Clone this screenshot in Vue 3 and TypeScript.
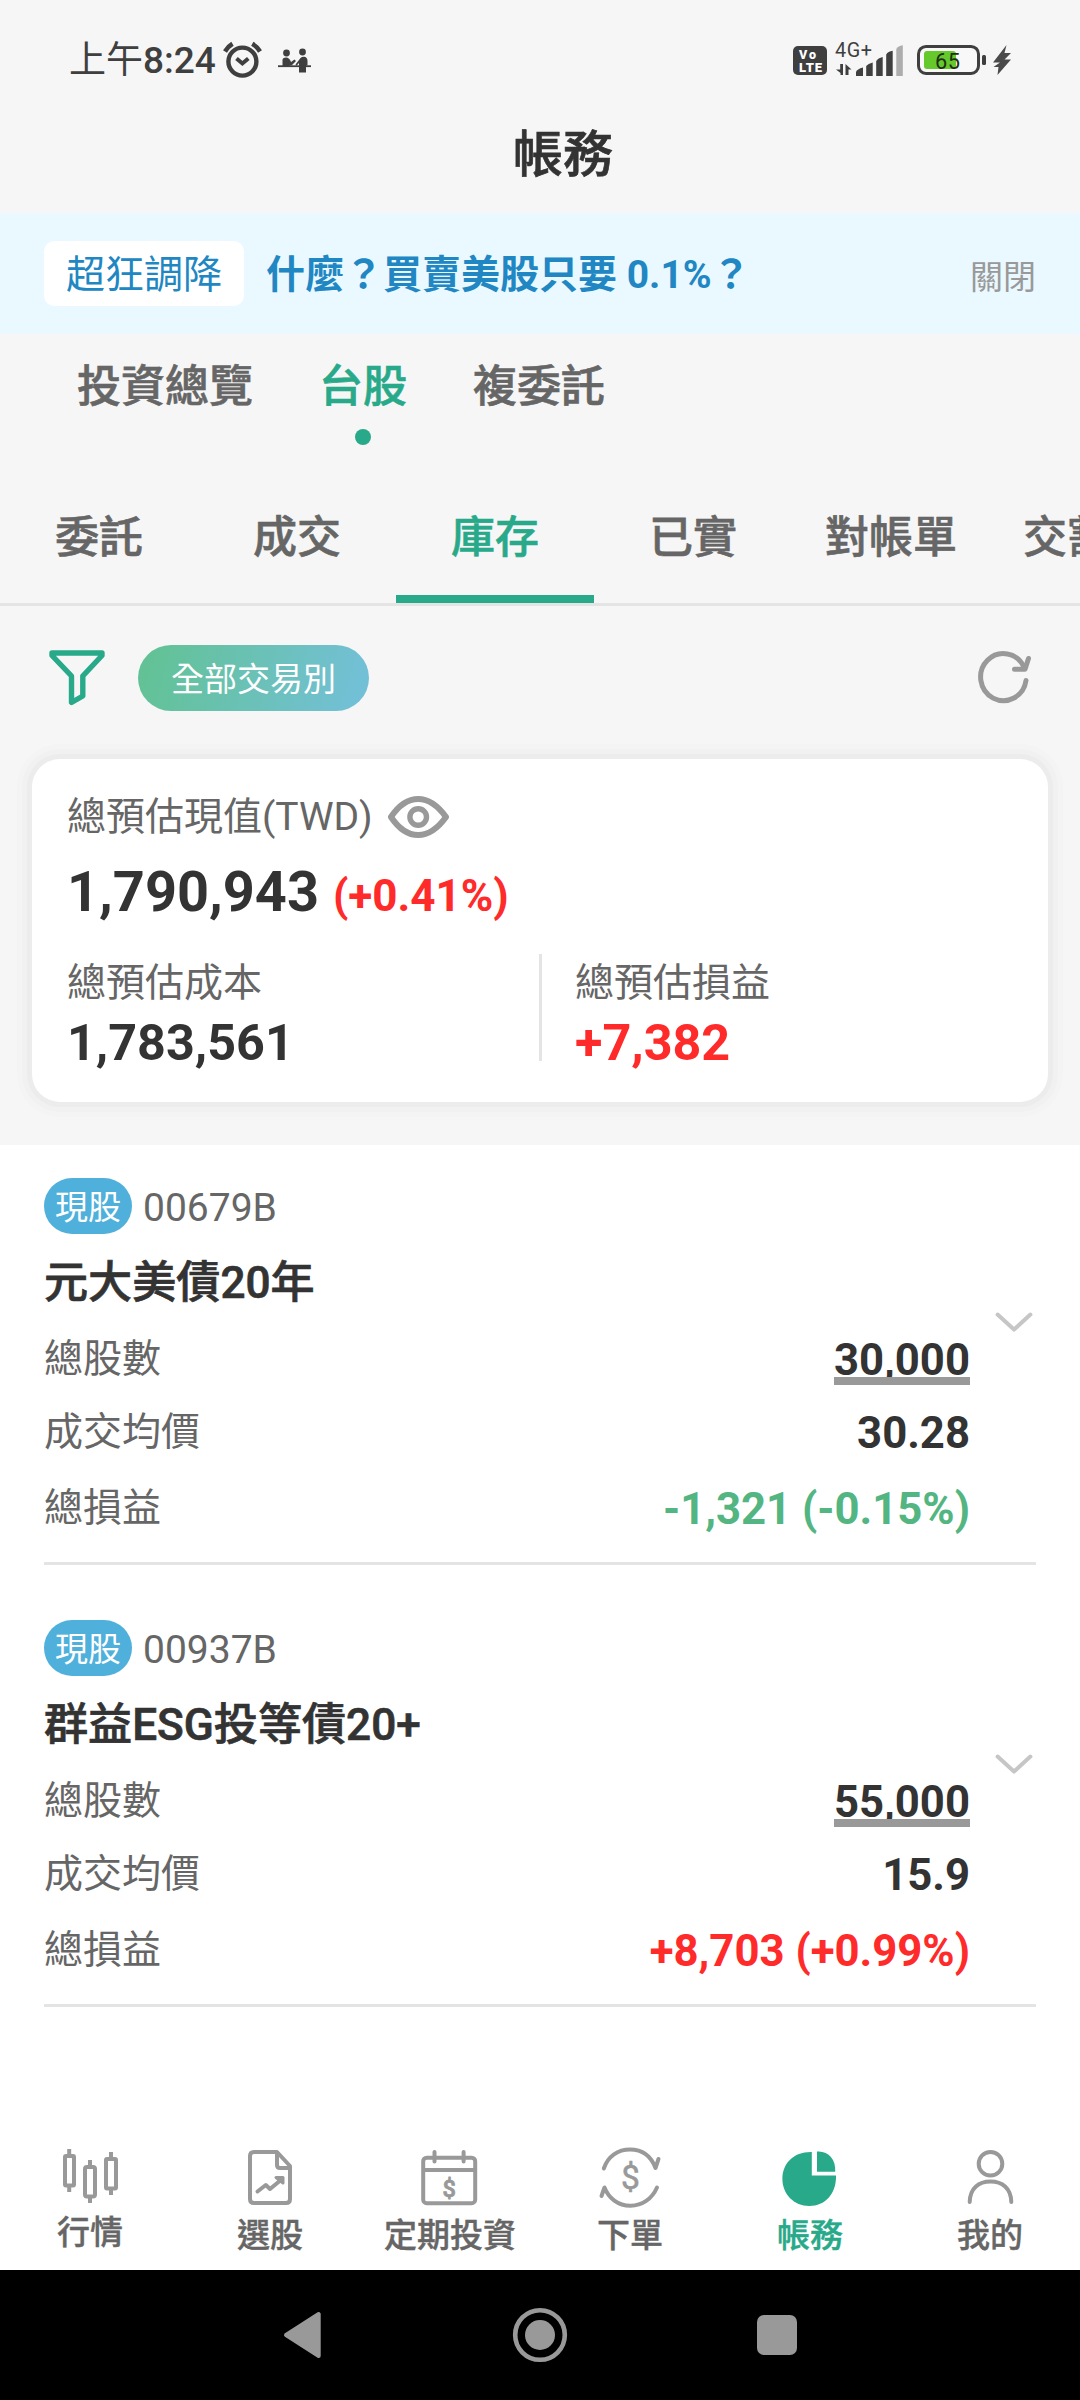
<script setup lang="ts">
interface Holding {
  code: string
  name: string
  shares: string
  price: string
  profit: string
  up: boolean
}

interface Tab {
  label: string
  active?: boolean
}

const marketTabs: Tab[] = [
  { label: '投資總覽' },
  { label: '台股', active: true },
  { label: '複委託' },
]

const recordTabs: Tab[] = [
  { label: '委託' },
  { label: '成交' },
  { label: '庫存', active: true },
  { label: '已實' },
  { label: '對帳單' },
  { label: '交割款' },
]

const holdings: Holding[] = [
  { code: '00679B', name: '元大美債20年', shares: '30,000', price: '30.28', profit: '-1,321 (-0.15%)', up: false },
  { code: '00937B', name: '群益ESG投等債20+', shares: '55,000', price: '15.9', profit: '+8,703 (+0.99%)', up: true },
]
</script>

<template>
  <div class="screen">
    <div class="top">
      <div class="status">
        <span class="clock"><span class="period">上午</span>8:24</span>
        <svg class="alarm" width="40" height="38" viewBox="223 40 40 38" fill="none" stroke="#3f3f3f">
          <circle cx="242.4" cy="60.6" r="14" stroke-width="4.4" />
          <path d="M225 50.5Q228 45.5 232.5 42.8M252.300 42.800Q257 45.500 260 50.500" stroke-width="4.6" />
          <path d="M236.500 57.500L242.400 62.500L248.300 57.500" stroke-width="4" />
        </svg>
        <svg class="people" width="34" height="26" viewBox="278 47 34 26" fill="#3f3f3f">
          <circle cx="286.500" cy="52" r="3.400" />
          <circle cx="302.500" cy="51" r="3.400" />
          <path d="M282.500 65V59Q282.500 56.500 286 56.500Q289.500 56.500 291 61L294.500 58.500L296 60L291.500 64.500H289.500V65Z" />
          <path d="M295.500 63.500L300.500 57Q302 55.500 304.500 55.800Q307.500 56.500 307.500 60V64.500H306V71.500H299V62L296.500 64.800Z" />
          <rect x="278" y="64.300" width="33" height="1.800" />
        </svg>
        <svg class="signals" width="220" height="38" viewBox="793 40 220 38">
          <rect x="793" y="45" width="34" height="29" rx="5" fill="#3f3f3f" />
          <text x="799" y="57.500" font-size="12.500" font-weight="900" fill="#fff" textLength="17">Vo</text>
          <text x="799" y="70.500" font-size="13" font-weight="900" fill="#fff" textLength="23">LTE</text>
          <text x="835" y="55.700" font-size="19.800" fill="#3f3f3f" textLength="37">4G+</text>
          <path d="M843 63V74H840.500V72L836 68.500H840.200V63ZM845.500 74V63L851.500 68.500H848.500V74Z" fill="#3f3f3f" />
          <path d="M856 75V71Q857 68 863 66.500V75ZM866.200 75V65Q868 62.500 872.700 61.500V75ZM876.200 75V60Q878 57 882.700 56V75ZM886.200 75V53.500Q888 50.500 892.700 49.800V75Z" fill="#3f3f3f" />
          <path d="M896.300 75V48Q898 45 902.800 44.300V75Z" fill="#adadad" />
          <rect x="918.500" y="45.400" width="60" height="27" rx="7.500" fill="#f8f8f8" stroke="#3f3f3f" stroke-width="3" />
          <rect x="924" y="50" width="32" height="18" rx="3" fill="#66c92b" />
          <text x="935" y="67.600" font-size="21.800" font-weight="400" fill="#1f2f14" textLength="25">65</text>
          <rect x="982" y="54" width="4" height="10" rx="1.500" fill="#3f3f3f" />
          <path d="M1006.500 44L993 61.500H1000L993.500 66H998.500L997.500 74L1011 58.500H1004.500L1011 52H1004.500Z" fill="#4a4a4a" />
        </svg>
      </div>
      <h1 class="title">帳務</h1>
    </div>

    <div class="banner">
      <span class="chip">超狂調降</span>
      <span class="pitch">什麼？買賣美股只要 0.1%？</span>
      <span class="close">關閉</span>
    </div>

    <nav class="markets">
      <div v-for="tab in marketTabs" :key="tab.label" class="market" :class="{ active: tab.active }">
        <span>{{ tab.label }}</span>
        <i v-if="tab.active" class="dot"></i>
      </div>
    </nav>

    <nav class="records">
      <div v-for="tab in recordTabs" :key="tab.label" class="record" :class="{ active: tab.active }">{{ tab.label }}</div>
    </nav>

    <section class="assets">
      <div class="filters">
        <svg class="funnel" width="58" height="58" viewBox="48 649 58 58" fill="none" stroke="#28a989" stroke-width="5.400" stroke-linejoin="round">
          <path d="M52 653H102V655.500L82.800 676V696L71.500 702.500V676L52 655.500Z" />
        </svg>
        <span class="pill">全部交易別</span>
        <svg class="refresh" width="56" height="56" viewBox="976 650 56 56" fill="none" stroke="#999" stroke-width="5" stroke-linecap="round" stroke-linejoin="round">
          <path d="M1026 680.500A22.800 23.500 0 1 1 1024 667" />
          <path d="M1014.500 669.300H1025L1028.500 658.500" />
        </svg>
      </div>

      <div class="card">
        <div class="label worth">
          總預估現值(TWD)
          <svg width="62" height="44" viewBox="387 794 62 44" fill="none" stroke="#999">
            <path d="M391 816Q403 798 418.200 798Q433 798 446 816Q433 834 418.200 834Q403 834 391 816Z" stroke-width="6" stroke-linejoin="round" />
            <circle cx="418.200" cy="816" r="8.300" stroke-width="5.400" />
          </svg>
        </div>
        <div class="total">1,790,943<span class="rate">(+0.41%)</span></div>
        <div class="split">
          <div class="half">
            <div class="label">總預估成本</div>
            <div class="sum">1,783,561</div>
          </div>
          <div class="half right">
            <div class="label">總預估損益</div>
            <div class="sum up">+7,382</div>
          </div>
        </div>
      </div>
    </section>

    <section class="list">
      <article v-for="item in holdings" :key="item.code" class="item">
        <div class="inner">
          <div class="content">
            <div class="head">
              <span class="badge">現股</span>
              <span class="code">{{ item.code }}</span>
            </div>
            <div class="name">{{ item.name }}</div>
            <div class="row first">
              <span class="label">總股數</span>
              <span class="value linked">{{ item.shares }}</span>
            </div>
            <div class="row second">
              <span class="label">成交均價</span>
              <span class="value">{{ item.price }}</span>
            </div>
            <div class="row third">
              <span class="label">總損益</span>
              <span class="value" :class="item.up ? 'up' : 'down'">{{ item.profit }}</span>
            </div>
          </div>
          <svg class="chevron" width="40" height="22" viewBox="0 0 40 22" fill="none" stroke="#c6c6c6" stroke-width="4" stroke-linecap="round" stroke-linejoin="round">
            <path d="M3.600 3.600L20 18.600L36.400 3.600" />
          </svg>
        </div>
      </article>
    </section>

    <nav class="menu">
      <div class="entry raised">
        <svg width="64" height="64" viewBox="58 2145 64 64" fill="none" stroke="#999" stroke-width="4">
          <rect x="65" y="2156" width="9" height="29.500" rx="1" />
          <path d="M69.200 2149V2155M69.200 2186V2192" />
          <rect x="85" y="2167" width="10" height="29.500" rx="2" />
          <path d="M90 2160V2166M90 2197V2203" />
          <rect x="106" y="2159" width="10" height="29.500" rx="1" />
          <path d="M111 2152V2158M111 2189V2195" />
        </svg>
        <span>行情</span>
      </div>
      <div class="entry">
        <svg width="64" height="64" viewBox="238 2145 64 64" fill="none" stroke="#999" stroke-width="4" stroke-linecap="round" stroke-linejoin="round">
          <path d="M254 2152H277L290 2166V2199Q290 2203 286 2203H254Q250 2203 250 2199V2156Q250 2152 254 2152Z" />
          <path d="M277 2153V2165Q277 2168 280 2168H289" />
          <path d="M257.500 2191.500L265.800 2185L270 2189L281.500 2179.500" />
          <path d="M276 2177.500H283V2183Z" fill="#999" stroke-width="3" />
        </svg>
        <span>選股</span>
      </div>
      <div class="entry">
        <svg width="64" height="64" viewBox="418 2145 64 64" fill="none" stroke="#999" stroke-width="4" stroke-linecap="round" stroke-linejoin="round">
          <rect x="423.200" y="2157.700" width="52" height="45.500" rx="3.500" />
          <path d="M424 2170H475M434.500 2152V2161.500M463.600 2152V2161.500" />
          <text x="449.200" y="2196.500" font-size="23.500" text-anchor="middle" fill="#999" stroke-width="0.800">$</text>
        </svg>
        <span>定期投資</span>
      </div>
      <div class="entry">
        <svg width="64" height="64" viewBox="598 2145 64 64" fill="none" stroke="#999" stroke-width="4" stroke-linecap="round" stroke-linejoin="round">
          <path d="M603.800 2168.500C608 2156 618 2149.500 630 2149.500C642 2149.500 651 2156 655.500 2168L658.500 2159" />
          <path d="M657 2187.500C652 2199 642 2205.700 630.500 2205.700C618 2205.700 608.500 2198 604.500 2187.500L601.500 2196" />
          <text x="630.300" y="2189.300" font-size="33.500" font-weight="400" text-anchor="middle" fill="#999" stroke-width="0.600">$</text>
        </svg>
        <span>下單</span>
      </div>
      <div class="entry current">
        <svg width="64" height="64" viewBox="778 2145 64 64" fill="#28a989">
          <path d="M811.800 2152V2175.500H836C836.500 2194 825 2206 809.300 2206C794 2206 782.400 2194 782.400 2179C782.400 2163 794 2151.500 811.800 2152Z" />
          <path d="M817 2151.500C828 2150.500 836 2159 835.200 2171.700H817Z" />
        </svg>
        <span>帳務</span>
      </div>
      <div class="entry">
        <svg width="64" height="64" viewBox="958 2145 64 64" fill="none" stroke="#999" stroke-width="4" stroke-linecap="round">
          <ellipse cx="990.500" cy="2163.700" rx="11.800" ry="11.800" />
          <path d="M969.700 2202C970 2188 979 2181.500 990.500 2181.500C1002 2181.500 1011 2188 1011.300 2202" />
        </svg>
        <span>我的</span>
      </div>
    </nav>

    <div class="system">
      <svg width="38" height="48" viewBox="283 2311 38 48" fill="#999" stroke="#999" stroke-width="4" stroke-linejoin="round">
        <path d="M286 2335L318.700 2314V2356Z" />
      </svg>
      <svg width="56" height="56" viewBox="0 0 56 56">
        <circle cx="28" cy="28" r="24.800" fill="none" stroke="#999" stroke-width="4.600" />
        <circle cx="28" cy="28" r="15" fill="#999" />
      </svg>
      <i class="square"></i>
    </div>
  </div>
</template>

<style>
body {
  margin: 0;
}
</style>

<style scoped>
.screen {
  width: 1080px;
  height: 2400px;
  display: flex;
  flex-direction: column;
  overflow: hidden;
  background: #fff;
  color: #666;
  font-family: Roboto, 'Noto Sans CJK TC', sans-serif;
  font-size: 39px;
  white-space: nowrap;
}
.top {
  height: 213px;
  background: #f6f6f6;
}
.status {
  display: flex;
  height: 121px;
  align-items: center;
  padding: 0 67px 0 69px;
}
.clock {
  font-size: 37px;
  font-weight: 500;
  line-height: 121px;
  color: #3f3f3f;
  width: 154px;
}
.period {
  font-weight: 400;
}
.alarm {
  margin-top: -2px;
}
.people {
  margin-left: 15px;
}
.signals {
  margin-left: auto;
  margin-top: -2px;
  overflow: visible;
}
.title {
  margin: 0;
  padding-left: 46px;
  text-align: center;
  font-size: 50px;
  font-weight: 500;
  -webkit-text-stroke: 0.7px currentColor;
  line-height: 69px;
  color: #333;
}
.banner {
  display: flex;
  align-items: center;
  height: 121px;
  padding: 0 44px;
  background: #eaf8ff;
}
.chip {
  width: 200px;
  height: 65px;
  box-sizing: border-box;
  padding-top: 2px;
  text-align: center;
  line-height: 65px;
  border-radius: 10px;
  background: #fff;
  color: #2187c3;
}
.pitch {
  margin-left: 22px;
  padding-top: 4px;
  font-weight: 700;
  line-height: 65px;
  color: #2187c3;
}
.close {
  margin-left: auto;
  padding-top: 3px;
  font-size: 33px;
  color: #999;
}
.markets {
  display: flex;
  gap: 66px;
  height: 140px;
  box-sizing: border-box;
  padding: 20px 77px 0;
  background: #f6f6f6;
}
.market {
  display: flex;
  flex-direction: column;
  align-items: center;
  font-size: 44px;
  font-weight: 500;
  -webkit-text-stroke: 0.6px currentColor;
  line-height: 66px;
}
.market.active,
.record.active {
  color: #28a989;
}
.dot {
  width: 16px;
  height: 16px;
  margin-top: 9px;
  border-radius: 50%;
  background: #28a989;
}
.records {
  display: flex;
  overflow: hidden;
  border-bottom: 3px solid #e4e4e4;
  background: #f6f6f6;
}
.record {
  flex: none;
  width: 198px;
  height: 129px;
  box-sizing: border-box;
  text-align: center;
  font-size: 44px;
  font-weight: 500;
  -webkit-text-stroke: 0.6px currentColor;
  line-height: 129px;
}
.record.active {
  box-shadow: inset 0 -8px #28a989;
}
.assets {
  height: 539px;
  background: #f6f6f6;
}
.filters {
  display: flex;
  align-items: center;
  height: 144px;
  padding: 0 48px;
}
.pill {
  height: 66px;
  margin-left: 32px;
  padding: 0 33px;
  box-sizing: border-box;
  padding-top: 2px;
  border-radius: 33px;
  background: linear-gradient(106deg, #62c295 5%, #72c0d5 92%);
  color: #fff;
  font-size: 33px;
  line-height: 66px;
}
.refresh {
  margin-left: auto;
}
.card {
  height: 343px;
  margin: 9px 32px 0;
  box-sizing: border-box;
  padding: 31px 34px 0 35px;
  border-radius: 28px;
  background: #fff;
  box-shadow: 0 0 0 5px #ececec, 0 0 0 10px #f1f1f1, 0 0 0 15px #f4f4f4;
}
.label {
  color: #666;
}
.worth {
  display: flex;
  align-items: center;
  gap: 14px;
  height: 54px;
  line-height: 54px;
}
.total {
  height: 64px;
  margin-top: 16px;
  font-size: 55.9px;
  font-weight: 700;
  line-height: 64px;
  color: #333;
}
.rate {
  margin-left: 14px;
  font-size: 44px;
  color: #ff2a2a;
}
.split {
  display: flex;
  height: 107px;
  margin-top: 30px;
}
.half {
  width: 472px;
  box-sizing: border-box;
  padding-top: 4px;
  line-height: 50px;
}
.half.right {
  padding-left: 33px;
  border-left: 3px solid #e4e4e4;
}
.sum {
  margin-top: 17px;
  font-size: 50.3px;
  font-weight: 700;
  line-height: 36px;
  color: #333;
}
.list {
  flex: 1;
}
.item {
  height: 442px;
  box-sizing: border-box;
  padding: 33px 44px 0;
}
.inner {
  display: flex;
  height: 384px;
  border-bottom: 3px solid #e4e4e4;
}
.content {
  width: 926px;
}
.head {
  display: flex;
  align-items: center;
  height: 56px;
}
.badge {
  height: 56px;
  box-sizing: border-box;
  padding: 2px 11px 0;
  border-radius: 28px;
  background: #4fb0db;
  color: #fff;
  font-size: 33px;
  line-height: 56px;
}
.code {
  margin-left: 11px;
  line-height: 56px;
  padding-top: 3px;
}
.name {
  margin-top: 17px;
  font-size: 44.1px;
  font-weight: 500;
  -webkit-text-stroke: 0.7px currentColor;
  line-height: 64px;
  color: #333;
}
.row {
  display: flex;
  justify-content: space-between;
  height: 60px;
  line-height: 60px;
}
.first {
  margin-top: 14px;
}
.second {
  margin-top: 13px;
}
.third {
  margin-top: 16px;
}
.value {
  padding-top: 1px;
  font-size: 43.7px;
  font-weight: 700;
  color: #333;
}
.linked {
  position: relative;
}
.linked::after {
  content: '';
  position: absolute;
  left: 0;
  right: 0;
  top: 48px;
  height: 8px;
  background: #999;
}
.value.up,
.sum.up {
  color: #ff2a2a;
}
.down {
  color: #53b581;
}
.chevron {
  margin: 133px 0 0 24px;
}
.menu {
  display: flex;
  height: 125px;
}
.entry {
  flex: 1;
  display: flex;
  flex-direction: column;
  align-items: center;
  font-size: 33px;
  font-weight: 500;
  line-height: 44px;
}
.entry span {
  margin-top: 5px;
  -webkit-text-stroke: 0.4px currentColor;
}
.entry.raised span {
  margin-top: 2px;
}
.entry.current {
  color: #28a989;
}
.system {
  display: flex;
  align-items: center;
  height: 130px;
  padding-left: 283px;
  background: #000;
}
.system svg + svg {
  margin-left: 191px;
}
.square {
  width: 40px;
  height: 40px;
  margin-left: 189px;
  border-radius: 7px;
  background: #999;
}
</style>
